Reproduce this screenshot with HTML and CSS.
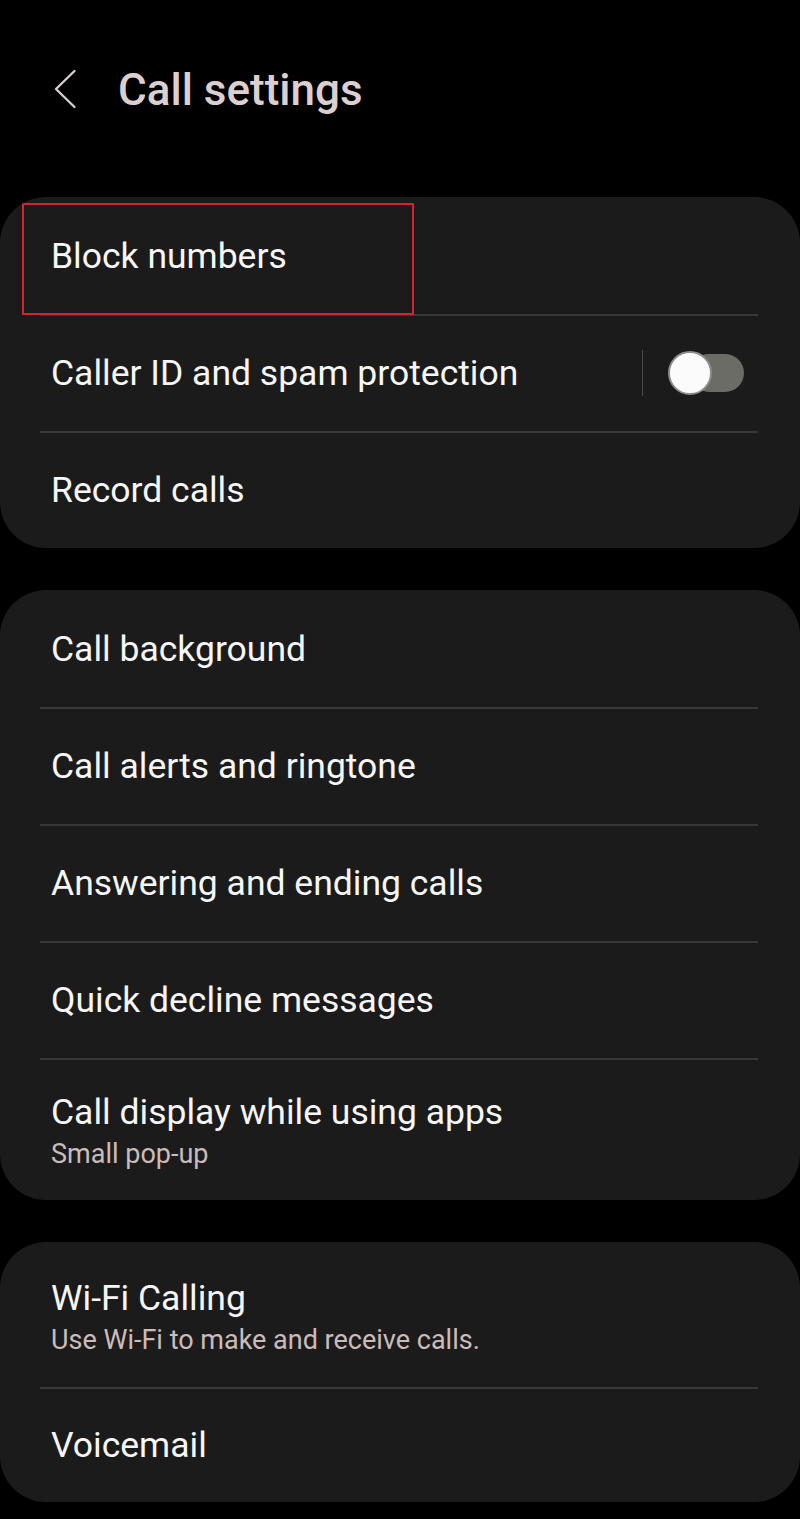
FILE: index.html
```html
<!DOCTYPE html>
<html>
<head>
<meta charset="utf-8">
<link rel="stylesheet" href="styles.css">
</head>
<body>
<div class="screen">
  <header class="header">
    <svg class="back" width="24" height="40" viewBox="0 0 24 40"><path d="M21.5 2 L3 20 L21.5 38" fill="none" stroke="#d8cccc" stroke-width="2.4" stroke-linecap="round" stroke-linejoin="round"/></svg>
    <h1 class="title">Call settings</h1>
  </header>

  <section class="card">
    <div class="row highlighted"><span class="label">Block numbers</span></div>
    <div class="row toggle-row">
      <span class="label">Caller ID and spam protection</span>
      <div class="toggle-wrap">
        <span class="vsep"></span>
        <span class="switch"><span class="thumb"></span></span>
      </div>
    </div>
    <div class="row"><span class="label">Record calls</span></div>
  </section>

  <section class="card">
    <div class="row"><span class="label">Call background</span></div>
    <div class="row"><span class="label">Call alerts and ringtone</span></div>
    <div class="row"><span class="label">Answering and ending calls</span></div>
    <div class="row"><span class="label">Quick decline messages</span></div>
    <div class="row two"><span class="label">Call display while using apps</span><span class="sub">Small pop-up</span></div>
  </section>

  <section class="card">
    <div class="row two wifi"><span class="label">Wi-Fi Calling</span><span class="sub">Use Wi-Fi to make and receive calls.</span></div>
    <div class="row last"><span class="label">Voicemail</span></div>
  </section>
</div>
</body>
</html>
```
FILE: styles.css
```css
html, body {
  margin: 0;
  padding: 0;
  background: #000;
}
.screen {
  width: 800px;
  min-height: 1519px;
  background: #000;
  font-family: Roboto, "Noto Sans", "Liberation Sans", sans-serif;
  color: #f4f4f4;
}
.header {
  height: 197px;
  display: flex;
  align-items: flex-start;
  box-sizing: border-box;
  padding-top: 66px;
}
.back {
  margin-left: 53px;
  margin-top: 3px;
}
.title {
  margin: 0 0 0 41px;
  font-size: 44px;
  font-weight: 500;
  line-height: 48px;
  color: #dccfcf;
  letter-spacing: 0;
}
.card {
  background: #1b1b1b;
  border-radius: 46px;
  margin-bottom: 42px;
  overflow: hidden;
}
.row {
  position: relative;
  height: 117px;
  display: flex;
  flex-direction: column;
  justify-content: center;
  padding-left: 51px;
  box-sizing: border-box;
}
.row + .row::before {
  content: "";
  position: absolute;
  top: 0;
  left: 40px;
  right: 42px;
  height: 2px;
  background: #383838;
}
.label {
  font-size: 35.5px;
  line-height: 40px;
  color: #f6f6f6;
}
.sub {
  font-size: 27px;
  line-height: 32px;
  color: #cbbcbc;
  margin-top: 6px;
}
.row.two {
  height: 142px;
  padding-top: 4px;
}
.row.wifi {
  height: 145px;
}
.row.last {
  height: 115px;
}
.highlighted {
  z-index: 2;
}
.highlighted::after {
  content: "";
  position: absolute;
  left: 22px;
  top: 6px;
  width: 388px;
  height: 108px;
  border: 2px solid #d42330;
}
.toggle-row {
  flex-direction: row;
  align-items: center;
  justify-content: space-between;
  padding-right: 56px;
}
.toggle-wrap {
  display: flex;
  align-items: center;
}
.vsep {
  width: 1px;
  height: 46px;
  background: #4a4a4a;
  margin-right: 25px;
}
.switch {
  position: relative;
  width: 76px;
  height: 38px;
  display: block;
}
.switch::before {
  content: "";
  position: absolute;
  left: 22px;
  top: 0;
  right: 0;
  bottom: 0;
  border-radius: 19px;
  background: #6c6c67;
}
.thumb {
  position: absolute;
  left: 0;
  top: -3px;
  width: 40px;
  height: 40px;
  border-radius: 50%;
  background: #fbfbfb;
  border: 2px solid #8d8d8d;
}
```
